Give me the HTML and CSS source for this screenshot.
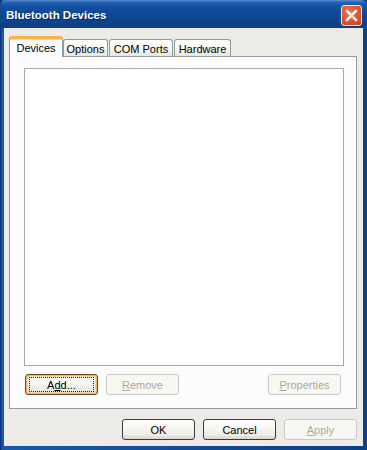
FILE: index.html
```html
<!DOCTYPE html>
<html>
<head>
<meta charset="utf-8">
<link rel="stylesheet" href="styles.css">
</head>
<body>
<div class="window">
  <div class="titlebar">
    <span class="title">Bluetooth Devices</span>
    <div class="close">
      <svg width="13" height="13" viewBox="0 0 13 13"><path d="M2 2 L11 11 M11 2 L2 11" stroke="#fff" stroke-width="2.4" stroke-linecap="square"/></svg>
    </div>
  </div>
  <div class="client">
    <div class="tabs">
      <div class="tab active">Devices</div>
      <div class="tab t-options">Options</div>
      <div class="tab t-com">COM Ports</div>
      <div class="tab t-hw">Hardware</div>
    </div>
    <div class="panel">
      <div class="list"></div>
      <div class="panel-buttons">
        <div class="btn default add"><span class="focus">A<u>d</u>d...</span></div>
        <div class="btn disabled"><u>R</u>emove</div>
        <div class="spacer"></div>
        <div class="btn disabled props"><u>P</u>roperties</div>
      </div>
    </div>
    <div class="dialog-buttons">
      <div class="btn">OK</div>
      <div class="btn">Cancel</div>
      <div class="btn disabled"><u>A</u>pply</div>
    </div>
  </div>
</div>
</body>
</html>
```
FILE: styles.css
```css
html, body {
  margin: 0;
  padding: 0;
  background: #0b3677;
}
body {
  font-family: "Liberation Sans", Arial, sans-serif;
  font-size: 11px;
  color: #000;
}
.window {
  width: 367px;
  height: 450px;
  display: flex;
  flex-direction: column;
  background: linear-gradient(90deg, #0a2c66 0, #1b55a3 2px, #1a58a8 3px, #0f3f84 100%);
}
.titlebar {
  height: 28px;
  flex: none;
  display: flex;
  align-items: center;
  justify-content: space-between;
  padding: 0 5px 0 6px;
  background: linear-gradient(180deg, #5d8ed2 0, #2b67b8 2px, #1553a4 5px, #0f4995 45%, #0d4389 80%, #0b3d80 100%);
  border-radius: 6px 6px 0 0;
}
.title {
  color: #fff;
  font-weight: bold;
  font-size: 11.5px;
  padding-top: 1px;
  text-shadow: 1px 1px 0 #0a2a60;
}
.close {
  width: 19px;
  height: 19px;
  border: 1px solid #f4ece8;
  border-radius: 3px;
  background: radial-gradient(circle at 40% 35%, #f07a55 0, #e05a30 45%, #c8401c 100%);
  display: flex;
  align-items: center;
  justify-content: center;
  margin-top: 2px;
}
.client {
  flex: 1;
  margin: 0 4px 4px 4px;
  background: #ecebe8;
  padding: 8px 6px 6px 5px;
  display: flex;
  flex-direction: column;
}
.tabs {
  height: 20px;
  display: flex;
  align-items: flex-end;
  position: relative;
  z-index: 1;
}
.tab {
  height: 17px;
  box-sizing: border-box;
  border: 1px solid #919b9c;
  border-bottom: none;
  border-radius: 3px 3px 0 0;
  background: linear-gradient(180deg, #ffffff 0, #f7f7f4 50%, #e6e5df 100%);
  display: flex;
  align-items: center;
  justify-content: center;
  padding-top: 1px;
}
.tab.active {
  width: 54px;
  height: 21px;
  margin-bottom: -1px;
  background: #fcfcfe;
  border-top: 3px solid #f5b343;
  box-shadow: inset 0 1px 0 #ffd98a;
  padding-top: 0;
}
.t-options { width: 45px; }
.t-com { width: 64px; margin-left: 1px; }
.t-hw { width: 57px; margin-left: 1px; }
.panel {
  height: 353px;
  box-sizing: border-box;
  border: 1px solid #919b9c;
  background: #fcfcfe;
  padding: 11px 12px 13px 14px;
  display: flex;
  flex-direction: column;
}
.list {
  height: 298px;
  box-sizing: border-box;
  border: 1px solid #a7a6aa;
  background: #fff;
}
.panel-buttons {
  margin-top: 8px;
  display: flex;
  gap: 8px;
  padding-left: 1px;
  padding-right: 3px;
}
.spacer { flex: 1; }
.btn {
  width: 73px;
  height: 21px;
  box-sizing: border-box;
  border: 1px solid #3a3a3a;
  border-radius: 3px;
  background: linear-gradient(180deg, #ffffff 0, #f6f5f1 45%, #ecebe6 80%, #d8d5cc 100%);
  display: flex;
  align-items: center;
  justify-content: center;
  font-size: 11px;
}
.btn.default {
  box-shadow: inset 0 0 0 1px #f3b859, inset 0 0 0 2px #fbd89a;
  border-color: #5b4a2e;
}
.focus {
  width: 63px;
  height: 13px;
  outline: 1px dotted #222;
  display: flex;
  align-items: center;
  justify-content: center;
}
.btn.disabled {
  border-color: #cac8bf;
  background: #f7f7f4;
  color: #aca899;
}
.dialog-buttons {
  margin-top: 10px;
  display: flex;
  justify-content: flex-end;
  gap: 8px;
}
```
